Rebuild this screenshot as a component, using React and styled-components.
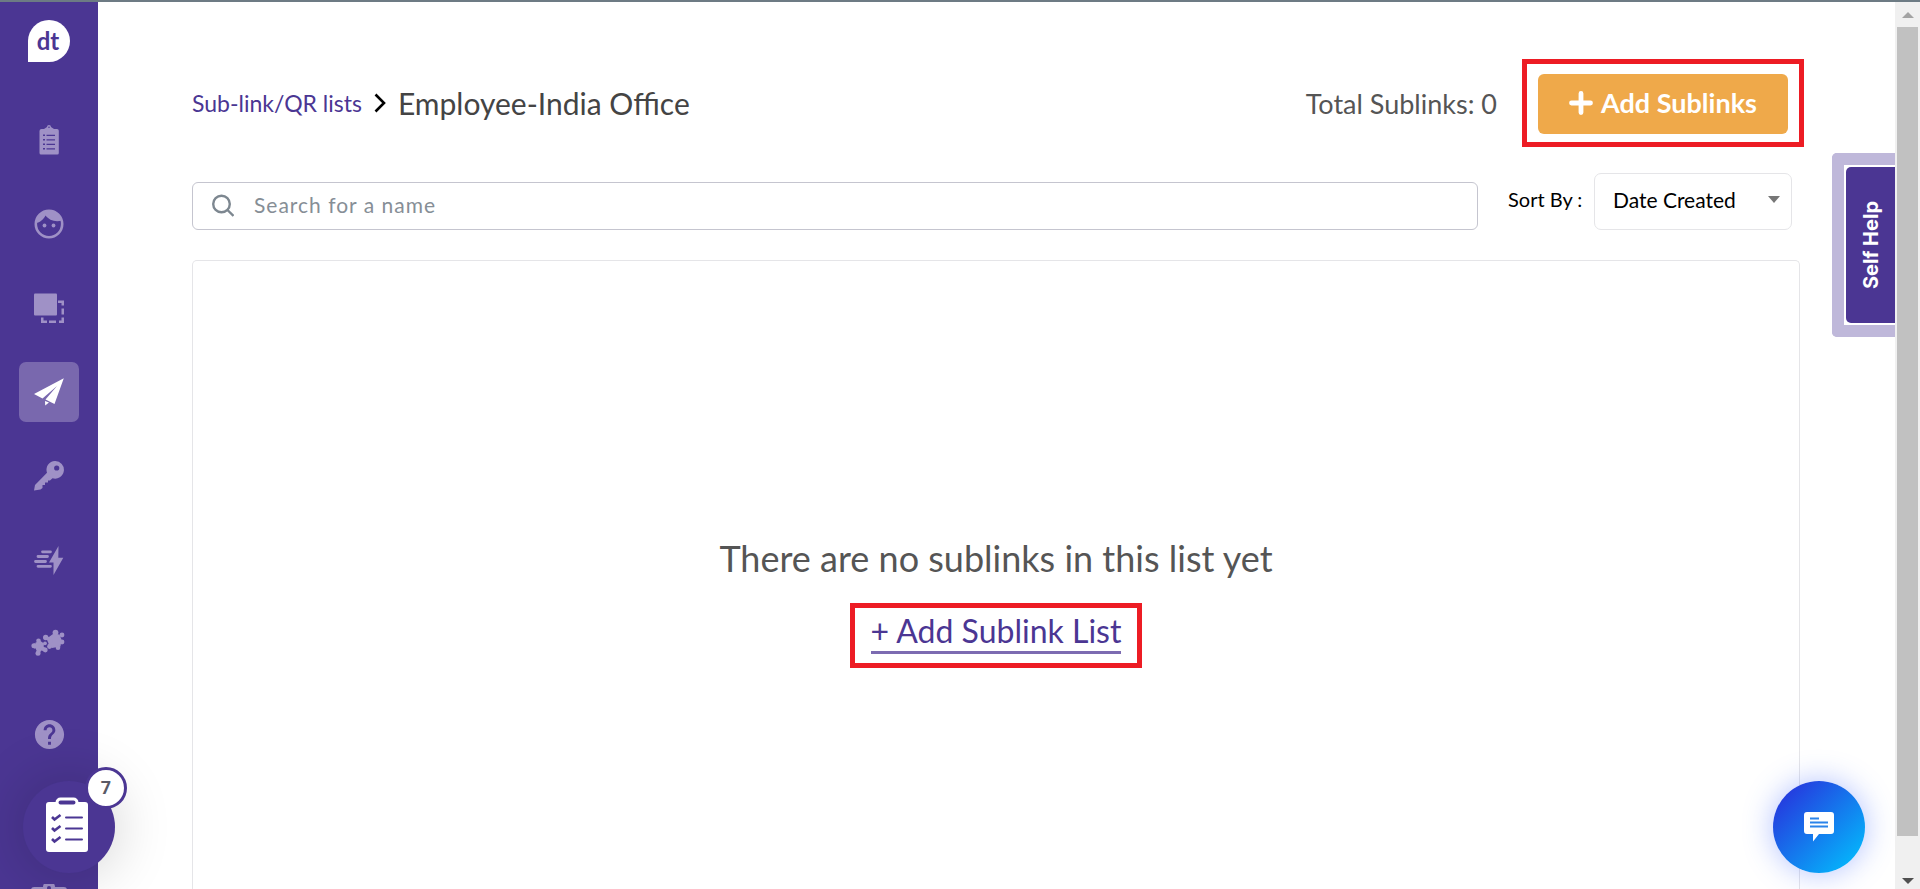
import styled, { createGlobalStyle } from "styled-components";
import { MdHelp } from "react-icons/md";

const NAV_ITEMS = [
  { id: "surveys", label: "Surveys", icon: <ClipboardListIcon /> },
  { id: "people", label: "People", icon: <FaceIcon /> },
  { id: "segments", label: "Segments", icon: <LayersIcon /> },
  { id: "distribute", label: "Distribute", icon: <PlaneIcon />, active: true },
  { id: "access", label: "Access keys", icon: <KeyIcon /> },
  { id: "workflows", label: "Workflows", icon: <BoltIcon /> },
  { id: "integrations", label: "Integrations", icon: <PuzzleIcon /> },
];

function ClipboardListIcon() {
  return (
    <svg width="20" height="30" viewBox="0 0 20 30" fill="currentColor">
      <path
        fillRule="evenodd"
        d="M8 2a2 2 0 0 1 4 0l3 2h3a1.800 1.800 0 0 1 1.800 1.800V28a1.500 1.500 0 0 1-1.500 1.500H2A1.500 1.500 0 0 1 .5 28V6A2 2 0 0 1 2.500 4H5zM10 1.400a.8.8 0 1 0 0 1.600.8.8 0 0 0 0-1.600zM4 9.500v1.500h2V9.500zM7.500 9.700V11H16V9.700zM4 14v1.500h2V14zM7.500 14.200v1.300H16v-1.300zM4 18.500V20h2v-1.500zM7.500 18.700V20H16v-1.300zM4 23v1.500h2V23zM7.500 23.200v1.300H16v-1.300z"
      />
    </svg>
  );
}

function FaceIcon() {
  return (
    <svg width="30" height="30" viewBox="0 0 30 30">
      <circle cx="15" cy="15" r="13.200" fill="none" stroke="currentColor" strokeWidth="2.600" />
      <path
        d="M2 14C6 13.500 9.500 10.500 11.500 6.500C15 11 21 13.500 28 11.500C26.500 5 21 1 15 1S3 6 2 14z"
        fill="currentColor"
      />
      <circle cx="10.500" cy="16.500" r="1.900" fill="currentColor" />
      <circle cx="19.500" cy="16.500" r="1.900" fill="currentColor" />
    </svg>
  );
}

function LayersIcon() {
  return (
    <svg width="30" height="30" viewBox="0 0 30 30" fill="currentColor">
      <rect x="0" y="0.500" width="23" height="22" rx="1" />
      <path d="M24 7.500h6v5h-2.500V10H24zM27.500 15.500H30v6h-2.500zM27.500 24.500H30V30h-5v-2.500h2.500zM15 27.500h7V30h-7zM7 24.500h2.500v3H13V30H7z" />
    </svg>
  );
}

function PlaneIcon() {
  return (
    <svg width="30" height="28" viewBox="0 0 30 28" fill="currentColor">
      <path d="M29.800.3L0 16l8.500 4.500L23 8zM29.800.3L23 8 11.500 21.500 20.500 26zM11 23l4 1.500-3.800 2.900z" />
    </svg>
  );
}

function KeyIcon() {
  return (
    <svg width="30" height="30" viewBox="0 0 30 30" fill="currentColor">
      <path
        fillRule="evenodd"
        d="M21 0a8.800 8.800 0 1 1-2.500 17.200L16 19.500h-2v2h-3v2.500H8.500V27L6.500 28.500 0 29.500 1 24 13 11.800A8.800 8.800 0 0 1 21 0zM22.700 4.400a2.600 2.600 0 1 0 0 5.200 2.600 2.600 0 0 0 0-5.200z"
      />
    </svg>
  );
}

function BoltIcon() {
  return (
    <svg width="30" height="29" viewBox="0 0 30 29" fill="currentColor">
      <path d="M24.500 0L15 16.500h4.500V29L29.300 11.800h-5z" />
      <path
        d="M8.500 5.800h8M4 10.500h9.500M1.500 15.500h10M4 20.300h12.500"
        fill="none"
        stroke="currentColor"
        strokeWidth="2.800"
        strokeLinecap="round"
      />
    </svg>
  );
}

function PuzzleIcon() {
  return (
    <svg width="36" height="30" viewBox="0 0 36 30" fill="currentColor">
      <path d="M18.500 7.500L22 5l6.500.5 2 5-1 7-8.500 1.500-4-3 2-3.500z" />
      <circle cx="24.500" cy="3.600" r="2.900" />
      <circle cx="31" cy="6" r="2.400" />
      <circle cx="31" cy="13" r="2.400" />
      <circle cx="27" cy="18.800" r="2.300" />
      <circle cx="18.500" cy="17.500" r="2.400" />
      <circle cx="14.700" cy="8.500" r="2.700" />
      <path d="M15 8.500l5-1 2 5-4 3z" />
      <path d="M4.500 13.500l5-1.500 3.500 2.500-.5 4.500-4 4.500L5 20.500z" />
      <circle cx="7.500" cy="11.800" r="2.300" />
      <circle cx="2.900" cy="16.800" r="2.500" />
      <circle cx="7" cy="24.300" r="2.500" />
      <circle cx="14.300" cy="21" r="2.400" />
      <circle cx="14" cy="14.300" r="1.900" />
      <path d="M3 14.500h5v5H3zM5.500 18h5.500l-2 6H5.500zM10 16.500l6 3-2.500 3L9 21z" />
    </svg>
  );
}

function ChecklistIcon() {
  return (
    <svg width="44" height="56" viewBox="0 0 44 56">
      <rect x="1" y="5" width="42" height="50" rx="3" fill="#fff" />
      <rect x="12" y="2" width="20" height="7" rx="3.500" fill="#4b3693" stroke="#fff" strokeWidth="3" />
      <path
        d="M7 20l2.500 2.500L15.500 18M7 31l2.500 2.500L15.500 29M7 42l2.500 2.500L15.500 40"
        fill="none"
        stroke="#4b3693"
        strokeWidth="2.600"
      />
      <path d="M21 20.500h16M21 31.500h16M21 42.500h16" stroke="#4b3693" strokeWidth="2" strokeLinecap="round" />
    </svg>
  );
}

function ChatIcon() {
  return (
    <svg width="30" height="30" viewBox="0 0 30 30">
      <path
        d="M3 0h24a3 3 0 0 1 3 3v16a3 3 0 0 1-3 3H15l-6 7.500V22H3a3 3 0 0 1-3-3V3a3 3 0 0 1 3-3z"
        fill="#fff"
      />
      <path d="M6 6.500h9M6 10.500h18M6 14.500h18" stroke="#2b84ea" strokeWidth="1.800" />
    </svg>
  );
}

function App() {
  return (
    <>
      <GlobalStyle />
      <Page>
        <Sidebar>
          <Logo href="#home">dt</Logo>
          <Nav>
            {NAV_ITEMS.map(item => (
              <NavLink
                key={item.id}
                href={`#${item.id}`}
                aria-label={item.label}
                $active={item.active}
              >
                {item.icon}
              </NavLink>
            ))}
          </Nav>
          <FooterNav>
            <NavLink href="#help" aria-label="Help">
              <MdHelp size={35} />
            </NavLink>
            <NavLink href="#tasks" aria-label="Tasks">
              <svg width="36" height="36" viewBox="0 0 36 36" fill="currentColor">
                <path
                  fillRule="evenodd"
                  d="M12 3a6 6 0 0 1 12 0h9a3 3 0 0 1 3 3v30H0V6a3 3 0 0 1 3-3zM18 2a2 2 0 1 0 0 4 2 2 0 0 0 0-4z"
                />
              </svg>
            </NavLink>
          </FooterNav>
        </Sidebar>
        <Main>
          <Header>
            <Breadcrumb aria-label="Breadcrumb">
              <CrumbLink href="#lists">Sub-link/QR lists</CrumbLink>
              <svg width="12" height="20" viewBox="0 0 12 20" fill="none">
                <path d="M1.500 1.500l8.500 8.500L1.500 18.500" stroke="#000" strokeWidth="2.600" />
              </svg>
              <CrumbTitle>Employee-India Office</CrumbTitle>
            </Breadcrumb>
            <HeaderActions>
              <Total>Total Sublinks: 0</Total>
              <Highlight $padding="10px 11px 8px">
                <AddButton type="button">
                  <svg width="24" height="24" viewBox="0 0 24 24">
                    <path d="M12 2.500v19M2.500 12h19" stroke="#fff" strokeWidth="4.800" strokeLinecap="round" />
                  </svg>
                  Add Sublinks
                </AddButton>
              </Highlight>
            </HeaderActions>
          </Header>
          <Toolbar>
            <SearchBox>
              <svg width="22" height="24" viewBox="0 0 22 24" fill="none" stroke="#7d8790" strokeWidth="2.400">
                <circle cx="9.500" cy="10" r="8.300" />
                <path d="M15.500 16l6 6" />
              </svg>
              <SearchInput type="text" aria-label="Search for a name" placeholder="Search for a name" />
            </SearchBox>
            <SortLabel htmlFor="sort">Sort By :</SortLabel>
            <SelectWrapper>
              <Select id="sort" defaultValue="created">
                <option value="created">Date Created</option>
                <option value="name">Name</option>
              </Select>
              <Caret />
            </SelectWrapper>
          </Toolbar>
          <Panel>
            <EmptyTitle>There are no sublinks in this list yet</EmptyTitle>
            <Highlight $padding="7px 16px 9px">
              <AddLink href="#add">+ Add Sublink List</AddLink>
            </Highlight>
          </Panel>
        </Main>
        <ScrollTrack>
          <ScrollArrow $up />
          <ScrollThumb />
          <ScrollArrow />
        </ScrollTrack>
        <SelfHelp>
          <SelfHelpButton type="button">Self Help</SelfHelpButton>
        </SelfHelp>
        <TaskButton type="button" aria-label="Open checklist">
          <ChecklistIcon />
          <TaskCount>7</TaskCount>
        </TaskButton>
        <ChatButton type="button" aria-label="Open chat">
          <ChatIcon />
        </ChatButton>
      </Page>
    </>
  );
}

const GlobalStyle = createGlobalStyle`
  *,
  *::before,
  *::after {
    box-sizing: border-box;
  }

  body {
    margin: 0;

    background-color: #fff;
    font-family: Lato, "Open Sans", sans-serif;
  }

  button,
  input,
  select {
    font-family: inherit;
  }

  a {
    text-decoration: none;
  }
`;

const Page = styled.div`
  position: relative;

  display: grid;
  grid-template-columns: 98px 1fr 25px;
  height: 100vh;
  overflow: hidden;

  border-top: 2px solid #6d7b84;
`;

const Sidebar = styled.aside`
  display: flex;
  flex-direction: column;
  align-items: center;
  min-height: 0;
  padding-top: 18px;

  background-color: #4b3693;
`;

const Logo = styled.a`
  flex-shrink: 0;
  width: 42px;
  height: 42px;
  padding-right: 2px;

  border-radius: 50% 50% 50% 0;
  background-color: #fff;
  color: #4b3693;
  font-size: 24px;
  font-weight: 700;
  line-height: 42px;
  text-align: center;
`;

const Nav = styled.nav`
  display: flex;
  flex-direction: column;
  gap: 24px;
  margin-top: 48px;
`;

const FooterNav = styled(Nav)`
  gap: 108px;
  margin-top: 30px;
`;

const NavLink = styled.a`
  display: flex;
  flex-shrink: 0;
  justify-content: center;
  align-items: center;
  width: 60px;
  height: 60px;

  border-radius: 7px;
  background-color: ${({ $active }) => ($active ? "#7968ae" : "transparent")};
  color: ${({ $active }) => ($active ? "#fff" : "#9f91c6")};
`;

const Main = styled.main`
  display: flex;
  flex-direction: column;
  min-width: 0;
  padding: 57px 95px 0 94px;
`;

const Header = styled.header`
  display: flex;
  justify-content: space-between;
  align-items: center;
  margin-right: -4px;
`;

const Breadcrumb = styled.nav`
  display: flex;
  align-items: center;
  gap: 12px;
`;

const CrumbLink = styled.a`
  color: #4b3693;
  font-size: 23px;
`;

const CrumbTitle = styled.h1`
  margin: 0;

  color: #444;
  font-size: 30px;
  font-weight: 400;
`;

const HeaderActions = styled.div`
  display: flex;
  align-items: center;
  gap: 25px;
`;

const Total = styled.span`
  color: #555;
  font-size: 27px;
`;

const Highlight = styled.div`
  padding: ${({ $padding }) => $padding};

  border: 5px solid #ed1c24;
`;

const AddButton = styled.button`
  display: flex;
  justify-content: center;
  align-items: center;
  gap: 8px;
  width: 250px;
  height: 60px;
  padding-bottom: 4px;

  border: 0;
  border-radius: 6px;
  background-color: #efa94a;
  color: #fff;
  font-size: 27px;
  font-weight: 700;
`;

const Toolbar = styled.div`
  display: flex;
  align-items: center;
  height: 58px;
  margin: 25px 8px 0 0;
`;

const SearchBox = styled.div`
  display: flex;
  flex: 1;
  align-items: center;
  align-self: flex-end;
  gap: 18px;
  height: 48px;
  margin-right: 30px;
  padding: 0 19px;

  border: 1px solid #c5c5cf;
  border-radius: 6px;
`;

const SearchInput = styled.input`
  flex: 1;
  padding-bottom: 4px;

  border: 0;
  outline: 0;
  font-size: 21px;
  letter-spacing: 1px;

  &::placeholder {
    color: #868e96;
    opacity: 1;
  }
`;

const SortLabel = styled.label`
  width: 86px;
  padding-bottom: 4px;

  color: #000;
  font-size: 20px;
`;

const SelectWrapper = styled.div`
  position: relative;
`;

const Select = styled.select`
  width: 198px;
  height: 57px;
  padding: 0 40px 4px 18px;

  appearance: none;
  border: 1px solid #e5e5e8;
  border-radius: 7px;
  background-color: #fff;
  color: #000;
  font-size: 21px;
`;

const Caret = styled.span`
  position: absolute;
  top: 23px;
  right: 12px;

  border-top: 7px solid #777;
  border-right: 6px solid transparent;
  border-left: 6px solid transparent;
  pointer-events: none;
`;

const Panel = styled.section`
  display: flex;
  flex: 1;
  flex-direction: column;
  align-items: center;
  gap: 24px;
  margin-top: 30px;
  padding-top: 276px;

  border: 1px solid #e5e5e8;
  border-bottom: 0;
  border-radius: 5px 5px 0 0;
`;

const EmptyTitle = styled.h2`
  margin: 0;

  color: #555;
  font-size: 36px;
  font-weight: 400;
  line-height: 42px;
`;

const AddLink = styled.a`
  display: block;
  padding-bottom: 4px;

  border-bottom: 3px solid #7c6bb1;
  color: #4b3693;
  font-size: 32px;
  line-height: 32px;
`;

const ScrollTrack = styled.div`
  display: flex;
  flex-direction: column;
  align-items: center;

  background-color: #f0f0f0;
`;

const ScrollThumb = styled.div`
  flex: 1;
  width: 21px;
  margin-bottom: 36px;

  background-color: #c1c1c1;
`;

const ScrollArrow = styled.span`
  margin: ${({ $up }) => ($up ? "10px 0 9px" : "6px 0 5px")};

  border-right: 6px solid transparent;
  border-left: 6px solid transparent;
  border-top: ${({ $up }) => ($up ? "0" : "6px solid #505050")};
  border-bottom: ${({ $up }) => ($up ? "6px solid #a3a3a3" : "0")};
`;

const SelfHelp = styled.div`
  position: absolute;
  top: 151px;
  right: 25px;

  padding: 2px 0 2px 2px;

  border: 12px solid #bfb8da;
  border-right: 0;
  border-radius: 5px 0 0 5px;
  background-color: #fff;
`;

const SelfHelpButton = styled.button`
  display: block;
  width: 49px;
  height: 156px;

  border: 0;
  border-radius: 5px 0 0 5px;
  background-color: #4b3693;
  color: #fff;
  font-family: Inter, sans-serif;
  font-size: 20px;
  font-weight: 700;
  writing-mode: sideways-lr;
`;

const FloatingButton = styled.button`
  position: absolute;
  bottom: 16px;

  display: flex;
  justify-content: center;
  align-items: center;
  width: 92px;
  height: 92px;

  border: 0;
  border-radius: 50%;
`;

const TaskButton = styled(FloatingButton)`
  left: 23px;

  padding: 0 4px 4px 0;

  background-color: #4b3693;
  box-shadow: 0 0 60px rgba(0, 0, 0, 0.2);
`;

const TaskCount = styled.span`
  position: absolute;
  top: -14px;
  right: -12px;

  width: 42px;
  height: 42px;

  border: 3px solid #4b3693;
  border-radius: 50%;
  background-color: #fff;
  color: #5a5a66;
  font-family: Roboto, sans-serif;
  font-size: 18px;
  font-weight: 700;
  line-height: 36px;
`;

const ChatButton = styled(FloatingButton)`
  right: 55px;

  background: linear-gradient(135deg, #2a27da, #00c6ff);
  box-shadow: 0 0 30px rgba(60, 100, 255, 0.4);
`;

export default App;
